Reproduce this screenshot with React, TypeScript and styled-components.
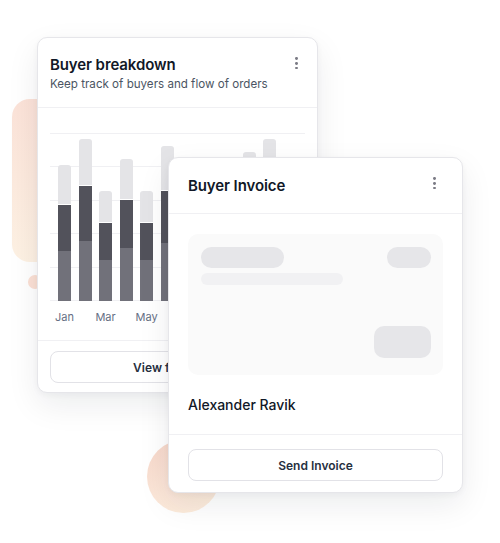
import React from "react";
import styled, { createGlobalStyle } from "styled-components";

const Global = createGlobalStyle`
  html, body { margin: 0; padding: 0; background: #ffffff; }
  body { font-family: Inter, "Noto Sans", Arial, sans-serif; -webkit-font-smoothing: antialiased; }
  * { box-sizing: border-box; }
`;

const Stage = styled.div`
  position: relative;
  width: 500px;
  height: 543px;
  overflow: hidden;
  padding: 37px 0 0 37px;
`;

const BlobRect = styled.div`
  position: absolute;
  left: 12px;
  top: 99px;
  width: 60px;
  height: 163px;
  border-radius: 18px;
  background: linear-gradient(180deg, #fbe2d8 0%, #fdf1e3 100%);
`;

const BlobDot = styled.div`
  position: absolute;
  left: 28px;
  top: 275px;
  width: 14px;
  height: 14px;
  border-radius: 50%;
  background: #fbe0d4;
`;

const BlobCircle = styled.div`
  position: absolute;
  left: 147px;
  top: 440px;
  width: 73px;
  height: 73px;
  border-radius: 50%;
  background: linear-gradient(160deg, #f6d6c9 0%, #fbe6d8 60%, #fdeedd 100%);
`;

const Card = styled.div<{ $w: number; $h: number }>`
  position: relative;
  width: ${(p) => p.$w}px;
  height: ${(p) => p.$h}px;
  background: #ffffff;
  border: 1px solid #e6e6ea;
  border-radius: 10px;
  box-shadow: 0 12px 32px rgba(15, 23, 42, 0.08), 0 2px 6px rgba(15, 23, 42, 0.04);
  display: flex;
  flex-direction: column;
`;

const OverlayCard = styled(Card)`
  position: absolute;
  left: 168px;
  top: 157px;
`;

const Header = styled.div<{ $pad: string }>`
  display: flex;
  justify-content: space-between;
  align-items: flex-start;
  padding: ${(p) => p.$pad};
  border-bottom: 1px solid #f0f0f3;
`;

const Titles = styled.div`
  display: flex;
  flex-direction: column;
`;

const Title = styled.div`
  font-size: 15px;
  line-height: 20px;
  font-weight: 600;
  color: #111827;
  letter-spacing: -0.1px;
`;

const Subtitle = styled.div`
  margin-top: 2px;
  font-size: 11.6px;
  line-height: 15px;
  color: #4b5563;
`;

const Kebab = styled.div<{ $mt: number }>`
  display: flex;
  flex-direction: column;
  gap: 2px;
  margin-top: ${(p) => p.$mt}px;
  padding: 0 2px;
  span {
    width: 2.8px;
    height: 2.8px;
    border-radius: 50%;
    background: #7b7b85;
  }
`;

const ChartSection = styled.div`
  padding: 25px 12px 0;
  display: flex;
  flex-direction: column;
`;

const Plot = styled.div`
  height: 168px;
  padding: 0 8px;
  display: flex;
  justify-content: space-between;
  align-items: flex-end;
  background-image: repeating-linear-gradient(
    to bottom,
    #f0f0f3 0px,
    #f0f0f3 1px,
    transparent 1px,
    transparent 33.4px
  );
`;

const BarCol = styled.div`
  width: 13px;
  display: flex;
  flex-direction: column;
  border-radius: 3px 3px 0 0;
  overflow: hidden;
`;

const Seg = styled.div<{ $c: string; $gap?: boolean }>`
  background: ${(p) => p.$c};
  border-bottom: ${(p) => (p.$gap ? "1px solid #ffffff" : "none")};
`;

const Labels = styled.div`
  display: flex;
  justify-content: space-between;
  padding: 0 8px;
  margin-top: 9px;
  height: 30px;
`;

const LabelCell = styled.div`
  width: 13px;
  display: flex;
  justify-content: center;
  font-size: 11px;
  line-height: 14px;
  color: #667085;
  white-space: nowrap;
`;

const Footer = styled.div<{ $pad: string }>`
  padding: ${(p) => p.$pad};
  border-top: 1px solid #f0f0f3;
`;

const Button = styled.button`
  width: 100%;
  height: 32px;
  border: 1px solid #e2e2e7;
  border-radius: 8px;
  background: #ffffff;
  font-family: Inter, "Noto Sans", Arial, sans-serif;
  font-size: 12px;
  font-weight: 600;
  color: #27303f;
  display: flex;
  align-items: center;
  justify-content: center;
`;

const Body = styled.div`
  padding: 20px 19px 19px;
  display: flex;
  flex-direction: column;
`;

const Skeleton = styled.div`
  height: 141px;
  border-radius: 10px;
  background: #fafafa;
  padding: 13px 12px 17px 13px;
  display: flex;
  flex-direction: column;
`;

const SkRow = styled.div`
  display: flex;
  justify-content: space-between;
`;

const Pill = styled.div<{ $w: number; $h: number; $c: string; $r: number }>`
  width: ${(p) => p.$w}px;
  height: ${(p) => p.$h}px;
  border-radius: ${(p) => p.$r}px;
  background: ${(p) => p.$c};
`;

const SkLine = styled(Pill)`
  margin-top: 5px;
`;

const SkBlock = styled(Pill)`
  margin-top: auto;
  align-self: flex-end;
`;

const Name = styled.div`
  margin-top: 20px;
  font-size: 14px;
  line-height: 20px;
  font-weight: 450;
  color: #111827;
`;

type Bar = { a: number; b: number; c: number };

const bars: Bar[] = [
  { a: 50, b: 46, c: 40 },
  { a: 60, b: 55, c: 47 },
  { a: 41, b: 37, c: 32 },
  { a: 53, b: 48, c: 41 },
  { a: 41, b: 37, c: 32 },
  { a: 58, b: 52, c: 45 },
  { a: 48, b: 44, c: 38 },
  { a: 46, b: 42, c: 36 },
  { a: 44, b: 40, c: 35 },
  { a: 55, b: 51, c: 43 },
  { a: 60, b: 55, c: 47 },
  { a: 46, b: 42, c: 36 },
];

const months = ["Jan", "", "Mar", "", "May", "", "Jul", "", "Sep", "", "Nov", ""];

const Dots = ({ mt }: { mt: number }) => (
  <Kebab $mt={mt}>
    <span />
    <span />
    <span />
  </Kebab>
);

export default function App() {
  return (
    <>
      <Global />
      <Stage>
        <BlobRect />
        <BlobDot />
        <BlobCircle />
        <Card $w={281} $h={356}>
          <Header $pad="17px 17px 15px 12px">
            <Titles>
              <Title>Buyer breakdown</Title>
              <Subtitle>Keep track of buyers and flow of orders</Subtitle>
            </Titles>
            <Dots mt={2} />
          </Header>
          <ChartSection>
            <Plot>
              {bars.map((b, i) => (
                <BarCol key={i}>
                  <Seg $c="#e4e4e7" $gap style={{ height: b.c }} />
                  <Seg $c="#52525b" style={{ height: b.b }} />
                  <Seg $c="#71717a" style={{ height: b.a }} />
                </BarCol>
              ))}
            </Plot>
            <Labels>
              {months.map((m, i) => (
                <LabelCell key={i}>{m}</LabelCell>
              ))}
            </Labels>
          </ChartSection>
          <Footer $pad="10px 12px 9px">
            <Button>View full report</Button>
          </Footer>
        </Card>
        <OverlayCard $w={295} $h={336}>
          <Header $pad="18px 24px 17px 19px">
            <Title>Buyer Invoice</Title>
            <Dots mt={1} />
          </Header>
          <Body>
            <Skeleton>
              <SkRow>
                <Pill $w={83} $h={21} $r={11} $c="#e6e6e9" />
                <Pill $w={44} $h={21} $r={11} $c="#e6e6e9" />
              </SkRow>
              <SkLine $w={142} $h={12} $r={6} $c="#f1f1f3" />
              <SkBlock $w={57} $h={32} $r={10} $c="#e6e6e9" />
            </Skeleton>
            <Name>Alexander Ravik</Name>
          </Body>
          <Footer $pad="14px 19px 12px">
            <Button>Send Invoice</Button>
          </Footer>
        </OverlayCard>
      </Stage>
    </>
  );
}
